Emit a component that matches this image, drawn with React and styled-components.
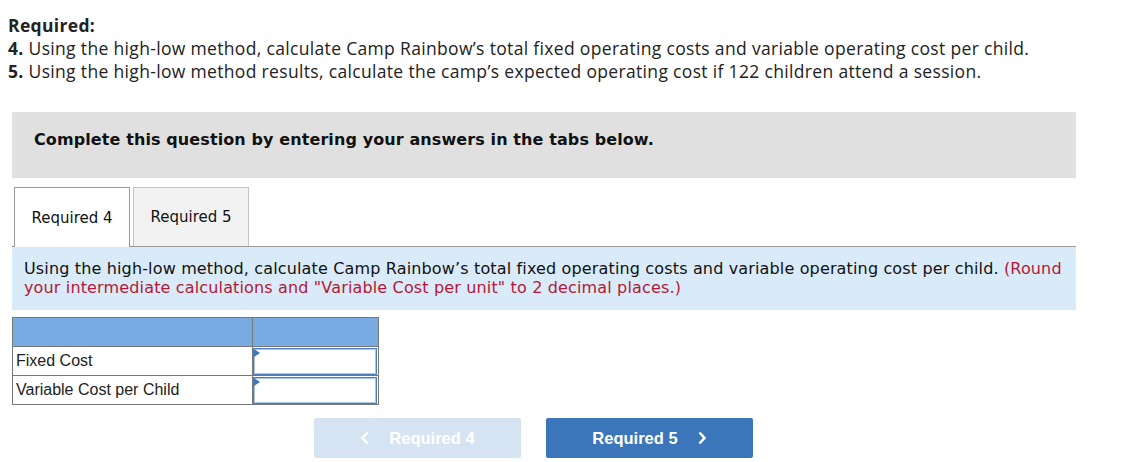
import React from 'react'
import { styled, createGlobalStyle } from 'styled-components';

const GlobalStyle = createGlobalStyle`
  body {
    margin: 0;
    background: #fff;
  }
`;

const Page = styled.main`
  width: 1146px;
  height: 462px;
  padding: 14px 0 0 0;
  box-sizing: border-box;
  overflow: hidden;
`;

const Intro = styled.div`
  padding-left: 8px;
  font-family: "Open Sans", "Liberation Sans", sans-serif;
  font-size: 17.5px;
  letter-spacing: 0.33px;
  line-height: 23px;
  color: #222;
`;

const Line = styled.div`
  white-space: nowrap;
`;

const Banner = styled.div`
  margin: 29px 0 0 12px;
  width: 1064px;
  height: 66px;
  background-color: #e0e0e0;
  display: flex;
  align-items: center;
  padding: 0 0 12px 22px;
  box-sizing: border-box;
  font-family: "DejaVu Sans", Verdana, sans-serif;
  font-weight: 700;
  font-size: 16px;
  letter-spacing: 0.1px;
  color: #111;
`;

const TabBar = styled.div`
  margin: 9px 0 0 12px;
  width: 1064px;
  padding-left: 2px;
  box-sizing: border-box;
  display: flex;
  gap: 3px;
  border-bottom: 1px solid #999;
`;

const Tab = styled.div`
  width: 116px;
  box-sizing: border-box;
  display: flex;
  align-items: center;
  justify-content: center;
  font-family: "DejaVu Sans", Verdana, sans-serif;
  font-size: 15px;
  color: #111;
  background-color: ${(props) => (props.active ? '#fff' : '#f2f2f2')};
  border: 1px solid ${(props) => (props.active ? '#999' : '#c4c4c4')};
  border-bottom: none;
  margin-bottom: ${(props) => (props.active ? '-1px' : '0')};
  height: ${(props) => (props.active ? '60px' : '59px')};
`;

const Info = styled.div`
  margin-left: 12px;
  width: 1064px;
  height: 63px;
  box-sizing: border-box;
  background-color: #d9eaf8;
  padding: 12px 2px 0 12px;
  font-family: "DejaVu Sans", Verdana, sans-serif;
  font-size: 16px;
  letter-spacing: 0.15px;
  line-height: 19px;
  color: #111;
`;

const Note = styled.span`
  color: #b41836;
`;

const Table = styled.table`
  margin: 7px 0 0 12px;
  border-collapse: collapse;
  font-family: "Liberation Sans", Arial, sans-serif;
  font-size: 16px;
  color: #222;
`;

const HeadCell = styled.td`
  background-color: #78abe1;
  border: 1px solid #777;
  height: 29px;
  padding: 0;
  width: ${(props) => props.w}px;
  box-sizing: border-box;
`;

const LabelCell = styled.td`
  border: 1px solid #777;
  height: 28px;
  padding: 0 0 0 3px;
  box-sizing: border-box;
  white-space: nowrap;
`;

const InputCell = styled.td`
  border: 1px solid #777;
  height: 28px;
  padding: 0;
  position: relative;
`;

const AnswerInput = styled.input`
  display: block;
  width: 124px;
  height: 27px;
  margin: 0;
  box-sizing: border-box;
  border: 1px solid #4d7fbd;
  box-shadow: inset 0 0 0 1px #a9c7ea;
  outline: none;
  background: #fff;
`;

const Flag = styled.span`
  position: absolute;
  left: 1px;
  top: 2px;
  width: 0;
  height: 0;
  border-top: 4px solid transparent;
  border-bottom: 4px solid transparent;
  border-left: 6px solid #3a77c4;
`;

const Nav = styled.div`
  margin: 13px 0 0 314px;
  display: flex;
  gap: 25px;
`;

const NavButton = styled.button`
  width: 207px;
  height: 40px;
  border: none;
  border-radius: 2px;
  display: flex;
  align-items: center;
  justify-content: center;
  gap: 19px;
  padding: 0;
  font-family: "Liberation Sans", Arial, sans-serif;
  font-weight: 700;
  font-size: 16.5px;
  color: #fff;
  background-color: ${(props) => (props.disabled ? '#d6e3f2' : '#3a76b9')};
`;

const Chevron = ({ dir }) => (
  <svg width="10" height="14" viewBox="0 0 10 14">
    <path
      d={dir === 'left' ? 'M7.5 1.5 L2.5 7 L7.5 12.5' : 'M2.5 1.5 L7.5 7 L2.5 12.5'}
      fill="none"
      stroke="#fff"
      strokeWidth="2.6"
    />
  </svg>
);

const App = () => {
  return (
    <Page>
      <GlobalStyle />
      <Intro>
        <Line><b>Required:</b></Line>
        <Line><b>4.</b> Using the high-low method, calculate Camp Rainbow’s total fixed operating costs and variable operating cost per child.</Line>
        <Line><b>5.</b> Using the high-low method results, calculate the camp’s expected operating cost if 122 children attend a session.</Line>
      </Intro>
      <Banner>Complete this question by entering your answers in the tabs below.</Banner>
      <TabBar>
        <Tab active>Required 4</Tab>
        <Tab>Required 5</Tab>
      </TabBar>
      <Info>
        Using the high-low method, calculate Camp Rainbow’s total fixed operating costs and variable operating cost per child. <Note>(Round your intermediate calculations and "Variable Cost per unit" to 2 decimal places.)</Note>
      </Info>
      <Table>
        <tbody>
          <tr>
            <HeadCell w={240} />
            <HeadCell w={126} />
          </tr>
          <tr>
            <LabelCell>Fixed Cost</LabelCell>
            <InputCell><Flag /><AnswerInput /></InputCell>
          </tr>
          <tr>
            <LabelCell>Variable Cost per Child</LabelCell>
            <InputCell><Flag /><AnswerInput /></InputCell>
          </tr>
        </tbody>
      </Table>
      <Nav>
        <NavButton disabled><Chevron dir="left" />Required 4</NavButton>
        <NavButton>Required 5<Chevron dir="right" /></NavButton>
      </Nav>
    </Page>
  )
}

export default App;
